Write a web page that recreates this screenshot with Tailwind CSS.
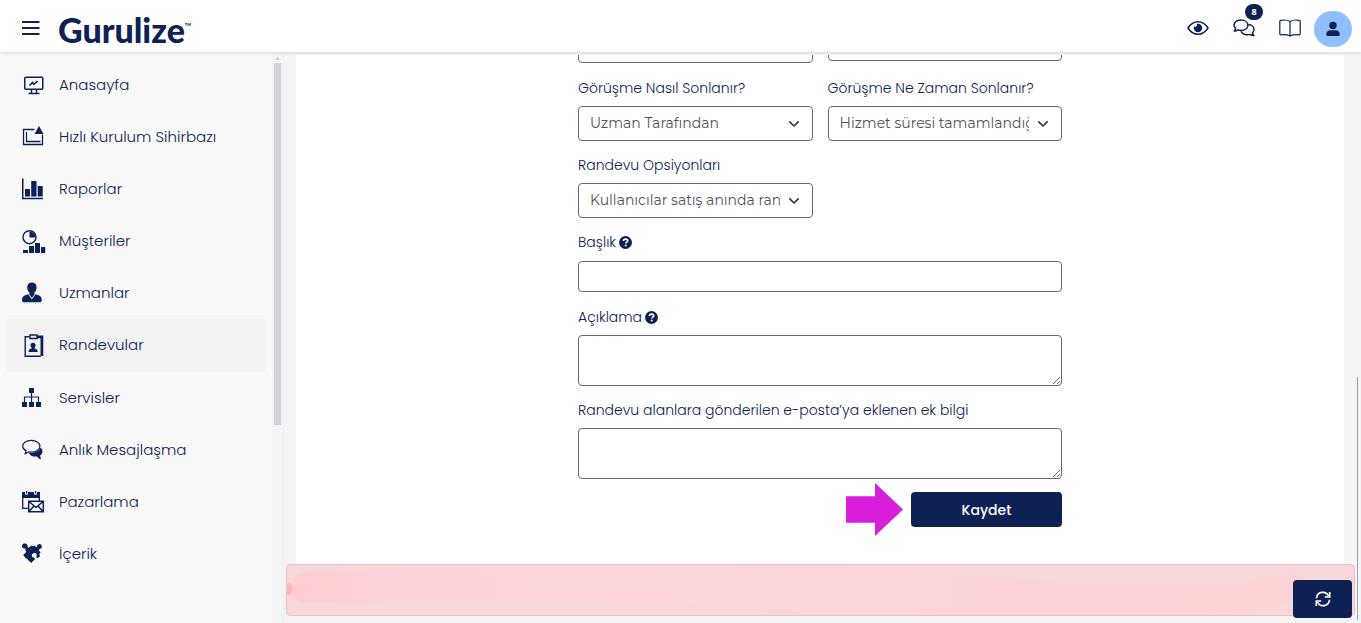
<!DOCTYPE html>
<html lang="tr">
<head>
<meta charset="utf-8">
<meta name="viewport" content="width=device-width, initial-scale=1">
<title>Gurulize – Randevular</title>
<script src="https://cdn.jsdelivr.net/npm/@tailwindcss/browser@4"></script>
</head>
<body class="flex h-screen flex-col overflow-hidden bg-[#f4f4f4] font-['Poppins','Inter',sans-serif] text-[#0e2154]">

<header class="relative z-10 flex h-[52px] shrink-0 items-center bg-white pl-[22px] pr-[9px] shadow-[0_1px_4px_rgba(0,0,0,0.12)]">
  <button type="button" aria-label="Menü" class="mt-1 flex h-6 w-[18px] items-center">
    <svg class="h-4 w-[18px]" viewBox="0 0 18 16" fill="none" stroke="currentColor" stroke-width="2"><path d="M0 2h17.500M0 8h17.500M0 14h17.500"/></svg>
  </button>
  <a href="#" class="ml-[18px] mt-2 flex items-start font-['Lato',sans-serif] text-[34px] leading-[44px] font-black">Gurulize<span class="mt-[14px] text-[4px] leading-[6px]">TM</span></a>
  <nav class="mt-1 ml-auto flex items-center gap-6" aria-label="Hesap">
    <button type="button" aria-label="Önizleme">
      <svg class="h-[22px] w-[22px]" viewBox="0 0 22 22" fill="none" stroke="currentColor" stroke-width="1.500"><path d="M1 11C3.500 7 7 4.800 11 4.800S18.500 7 21 11C18.500 15 15 17.200 11 17.200S3.500 15 1 11Z"/><path fill="currentColor" stroke="none" d="M11 6.800a4.200 4.200 0 1 1-4.200 4.200c0-.5.1-1 .3-1.400.9.500 2.100.2 2.600-.6.400-.7.400-1.400 0-2 .4-.1.800-.2 1.300-.2Z"/></svg>
    </button>
    <button type="button" aria-label="Mesajlar" class="relative">
      <svg class="h-[22px] w-[22px]" viewBox="0 0 22 22" fill="none" stroke="currentColor" stroke-width="1.500" stroke-linejoin="round"><path d="M8 3c4 0 6.900 2.200 6.900 5.200S12 13.400 8 13.400c-1 0-2-.1-2.900-.5-1 .7-2.300 1.100-3.900 1.100.8-.8 1.300-1.700 1.400-2.700C1.600 10.400 1 9.300 1 8.200 1 5.200 4 3 8 3Z"/><path d="M15.200 7.500c3.300.2 5.800 2.200 5.800 4.900 0 1.200-.5 2.300-1.500 3.200.1 1.200.6 2.100 1.400 3-1.600 0-3-.4-4-1.200-.9.300-1.700.4-2.700.4-2.900 0-5.200-1.400-6.100-3.600"/></svg>
      <span class="absolute -top-[13px] left-3 flex h-4 w-[18px] items-center justify-center rounded-full bg-[#0e2154] font-['Noto_Sans',sans-serif] text-[9px] font-bold text-white">8</span>
    </button>
    <button type="button" aria-label="Kılavuz">
      <svg class="h-[22px] w-[22px]" viewBox="0 0 22 22" fill="none" stroke="currentColor" stroke-width="1.200" stroke-linejoin="round"><path d="M11 4.500C8.500 3 4.500 2.800 1.700 3.400a1 1 0 0 0-.9 1v12.400a1 1 0 0 0 1.100 1C5 17.400 8.500 17.700 11 19c2.500-1.300 6-1.600 9.100-1.200a1 1 0 0 0 1.100-1V4.400a1 1 0 0 0-.9-1C17.500 2.800 13.500 3 11 4.500ZM11 4.500V19"/></svg>
    </button>
    <button type="button" aria-label="Profil" class="-ml-[11px] mt-[2px] flex h-9 w-[38px] items-center justify-center rounded-full bg-[#8fbfff]">
      <svg class="h-4 w-4" viewBox="0 0 16 16" fill="currentColor"><circle cx="8" cy="4.500" r="3.700"/><path d="M1.200 13.500c0-2.500 1.700-4.200 4.300-4.200h5c2.600 0 4.300 1.700 4.300 4.200 0 .9-.5 1.400-1.400 1.400H2.600c-.9 0-1.400-.5-1.400-1.400Z"/></svg>
    </button>
  </nav>
</header>

<div class="flex min-h-0 flex-1">
  <aside class="flex w-[284px] shrink-0 border-r border-[#eeeeee] bg-[#f9f9f9]">
    <nav class="flex-1 pl-[7px] pr-[7px] pt-[7px] text-[15px] font-light" aria-label="Ana menü">
      <a href="#" class="flex h-[52px] items-center gap-[13px] pl-[15px]">
        <svg class="h-6 w-6" viewBox="0 0 24 24" fill="none" stroke="currentColor" stroke-width="1.500"><rect x="2.750" y="4.250" width="18" height="12" rx="1"/><path d="M9.500 16.500v3.500M14.500 16.500v3.500M6.500 20.500h11"/><path stroke-width="1.700" d="M7.500 12.500l3-3 1.500 1.800 3.500-3.300"/></svg>
        Anasayfa</a>
      <a href="#" class="flex h-[52px] items-center gap-[13px] pl-[15px]">
        <svg class="h-6 w-6" viewBox="0 0 24 24" fill="none" stroke="currentColor" stroke-width="1.300"><path d="M12.500 4.500h-11v15h19v-10"/><path d="M4.500 7v9.500h14"/><path fill="currentColor" stroke="none" d="M17 1l4.500 8h-9Z"/></svg>
        Hızlı Kurulum Sihirbazı</a>
      <a href="#" class="flex h-[52px] items-center gap-[13px] pl-[15px]">
        <svg class="h-6 w-6" viewBox="0 0 24 24" fill="currentColor"><path d="M0 1.500h1.500v19.300H21v1.500H0ZM3 12h5v7.500H3ZM9.200 4h5.300v15.500H9.200ZM15.700 9h5v10.500h-5Z"/></svg>
        Raporlar</a>
      <a href="#" class="flex h-[52px] items-center gap-[13px] pl-[15px]">
        <svg class="h-6 w-6" viewBox="0 0 24 24" fill="currentColor"><circle cx="7.500" cy="8.200" r="6.500" fill="none" stroke="currentColor" stroke-width="1.400"/><path d="M7.500 2.500a6 6 0 0 1 6 6h-6ZM1 21h5v3H1ZM7 17h5v7H7ZM13 14h5v10h-5ZM19 18h4.200v6H19Z"/></svg>
        Müşteriler</a>
      <a href="#" class="flex h-[52px] items-center gap-[13px] pl-[15px]">
        <svg class="h-6 w-6" viewBox="0 0 24 24" fill="currentColor"><path d="M9.900 1.500c3 0 4.700 1.900 4.700 4.700 0 2.200-.8 4-2.100 5.400v1.700L9.900 17l-2.600-3.700v-1.700C6 10.200 5.200 8.400 5.200 6.200c0-2.800 1.700-4.700 4.700-4.700Z"/><path d="M6.300 13.300l3.500 5.300 3.700-5.300c3.500.7 6.300 2 6.300 5.500 0 1.500-.4 2.400-1.700 2.400H1.700C.4 21.200 0 20.300 0 18.800c0-3.500 2.800-4.800 6.300-5.500Z"/></svg>
        Uzmanlar</a>
      <a href="#" aria-current="page" class="flex h-[53px] items-center gap-[13px] bg-[#f2f2f2] pl-[15px]">
        <svg class="h-6 w-6" viewBox="0 0 24 24" fill="none" stroke="currentColor"><path stroke-width="1.400" d="M7.500 2.700H3.200v19.600h15.600"/><path stroke-width="2.800" d="M15 2.800h4.900V22"/><path stroke-width="1.400" d="M8 1h7v3.500H8Z"/><path fill="currentColor" stroke="none" d="M11 8.700c1.700 0 2.600 1.100 2.600 2.500 0 1-.4 1.900-1.100 2.500v.7c1.800.3 3.200 1 3.200 3.600H6.500c0-2.600 1.400-3.300 3.200-3.600v-.7c-.7-.6-1.200-1.500-1.200-2.500 0-1.400.9-2.500 2.500-2.500Z"/></svg>
        Randevular</a>
      <a href="#" class="flex h-[52px] items-center gap-[13px] pl-[15px]">
        <svg class="h-6 w-6" viewBox="0 0 24 24" fill="currentColor"><path d="M7 2h5v5H7ZM0 16h5v5H0ZM7 16h5v5H7ZM14 16h5v5h-5Z"/><path fill="none" stroke="currentColor" stroke-width="1.200" d="M9.500 6v10M2.500 16v-5h14v5"/></svg>
        Servisler</a>
      <a href="#" class="flex h-[52px] items-center gap-[13px] pl-[15px]">
        <svg class="h-6 w-6" viewBox="0 0 24 24" fill="currentColor"><path fill="none" stroke="currentColor" stroke-width="1.200" d="M9.300 2.300c5 0 8.600 2.400 8.600 5.900s-3.600 5.900-8.600 5.900c-1 0-2-.1-2.900-.3-.9 1-2 1.600-3.300 1.900.6-1 .9-2 .8-3.100C1.800 11.500.7 9.900.7 8.200c0-3.500 3.600-5.900 8.600-5.900Z"/><path d="M18.600 9.700c1.300 1 1.900 2.200 1.900 3.700 0 1.700-.9 3.100-2.400 4.100 0 1.100.4 2.500 1.300 4-2-.4-3.500-1.400-4.400-3-4.200.4-7.300-1.200-8-3.600 5.500 0 10.200-1.300 11.600-5.200Z"/></svg>
        Anlık Mesajlaşma</a>
      <a href="#" class="flex h-[52px] items-center gap-[13px] pl-[15px]">
        <svg class="h-6 w-6" viewBox="0 0 24 24" fill="currentColor"><path d="M0 2h3v2.500h3V2h6v2.500h3V2h3v6H0ZM4 1h1.200v2.500H4ZM13 1h1.200v2.500H13Z"/><path fill="none" stroke="currentColor" stroke-width="1.300" d="M.7 7v11.300H6M17.300 7v4"/><path fill="none" stroke="currentColor" stroke-width="1.500" d="M6.700 11.200h14.600v10.600H6.700ZM7 11.500l7 6 7-6M7 21.500l5-5.500M21 21.500L16 16"/></svg>
        Pazarlama</a>
      <a href="#" class="flex h-[52px] items-center gap-[13px] pl-[15px]">
        <svg class="h-6 w-6" viewBox="0 0 24 24" fill="currentColor"><path d="M2.500 1.500a2.500 2.500 0 0 1 2.900 3.300l1.100 1L9.500 3.500l1.500 1 1.300-.9 2 1.700.6-.7a2.500 2.500 0 1 1 2.800 2.500l-1 1.300 1.900 1.900-1.400 2 .9 1.700-2.500 2.300-1.500-1.500c1.300-1.300.6-3.400-1.200-3.700-2-.3-3.500 1.300-3 3.100.3 1 1.200 1.600 2.200 1.400l1 1.500L9.200 21 6 18l-1-1.500-1.400-.3-2.300-3.300 2.900-3-1-2.400.4-1.300A2.500 2.500 0 1 1 2.500 1.500Z"/></svg>
        İçerik</a>
    </nav>
    <div class="flex w-[11px] flex-col items-center bg-[#f4f4f4] pt-[5px]" aria-hidden="true">
      <svg class="h-[3px] w-[5px]" viewBox="0 0 5 3" fill="#c6c9cf"><path d="M2.500 0L5 3H0Z"/></svg>
      <div class="mt-[3px] h-[362px] w-[7px] bg-[#cfd2d8]"></div>
    </div>
  </aside>

  <main class="flex min-w-0 flex-1 flex-col pt-[3px]">
    <section class="ml-3 mr-[17px] flex-1 bg-white px-6">
      <form class="mx-auto flex max-w-[484px] flex-col text-[14px] leading-5 font-light text-[#0e2154]" onsubmit="return false">
        <div class="grid grid-cols-2 items-start gap-x-[15px]">
          <div class="flex h-2 items-end overflow-hidden"><select aria-label="Görüşme türü" class="h-[35px] w-full shrink-0 appearance-none rounded border border-[#6b6b6b] bg-white"><option></option></select></div>
          <div class="flex h-[6px] items-end overflow-hidden"><select aria-label="Görüşme süresi" class="h-[35px] w-full shrink-0 appearance-none rounded border border-[#6b6b6b] bg-white"><option></option></select></div>
        </div>

        <div class="mt-[15px] grid grid-cols-2 gap-x-[15px] gap-y-[14px]">
          <div>
            <label for="end-how" class="block">Görüşme Nasıl Sonlanır?</label>
            <div class="relative mt-2">
              <select id="end-how" class="block h-[35px] w-full appearance-none rounded border border-[#6b6b6b] bg-white pb-[2px] pl-[11px] pr-8 font-['Montserrat','Inter',sans-serif] text-[14px] font-normal text-[#505459]"><option>Uzman Tarafından</option></select>
              <svg class="pointer-events-none absolute right-[13px] top-3 h-3 w-3" viewBox="0 0 12 12" fill="none" stroke="#343a40" stroke-width="1.700" stroke-linecap="round" stroke-linejoin="round"><path d="M1.800 3.800L6 8l4.200-4.200"/></svg>
            </div>
          </div>
          <div>
            <label for="end-when" class="block">Görüşme Ne Zaman Sonlanır?</label>
            <div class="relative mt-2">
              <select id="end-when" class="block h-[35px] w-full appearance-none rounded border border-[#6b6b6b] bg-white pb-[2px] pl-[11px] pr-8 font-['Montserrat','Inter',sans-serif] text-[14px] font-normal text-[#505459]"><option>Hizmet süresi tamamlandığında</option></select>
              <svg class="pointer-events-none absolute right-[13px] top-3 h-3 w-3" viewBox="0 0 12 12" fill="none" stroke="#343a40" stroke-width="1.700" stroke-linecap="round" stroke-linejoin="round"><path d="M1.800 3.800L6 8l4.200-4.200"/></svg>
            </div>
          </div>
          <div>
            <label for="options" class="block">Randevu Opsiyonları</label>
            <div class="relative mt-2">
              <select id="options" class="block h-[35px] w-full appearance-none rounded border border-[#6b6b6b] bg-white pb-[2px] pl-[11px] pr-8 font-['Montserrat','Inter',sans-serif] text-[14px] font-normal text-[#505459]"><option>Kullanıcılar satış anında randevu alır</option></select>
              <svg class="pointer-events-none absolute right-[13px] top-3 h-3 w-3" viewBox="0 0 12 12" fill="none" stroke="#343a40" stroke-width="1.700" stroke-linecap="round" stroke-linejoin="round"><path d="M1.800 3.800L6 8l4.200-4.200"/></svg>
            </div>
          </div>
        </div>

        <label for="title" class="mt-[14px] flex items-center gap-[3px]">Başlık
          <svg class="h-[13px] w-[13px]" viewBox="0 0 13 13"><circle cx="6.500" cy="6.500" r="6.500" fill="#0e2154"/><path d="M4.400 5c.1-1.200.9-1.900 2.200-1.900 1.200 0 2.100.7 2.100 1.700 0 1.300-1.800 1.400-1.900 2.700" fill="none" stroke="#fff" stroke-width="1.600"/><circle cx="6.700" cy="9.600" r="1" fill="#fff"/></svg>
        </label>
        <input id="title" type="text" class="mt-[9px] h-[31px] w-full rounded border border-[#6b6b6b] bg-white px-3">

        <label for="description" class="mt-[15px] flex items-center gap-[3px]">Açıklama
          <svg class="h-[13px] w-[13px]" viewBox="0 0 13 13"><circle cx="6.500" cy="6.500" r="6.500" fill="#0e2154"/><path d="M4.400 5c.1-1.200.9-1.900 2.200-1.900 1.200 0 2.100.7 2.100 1.700 0 1.300-1.800 1.400-1.900 2.700" fill="none" stroke="#fff" stroke-width="1.600"/><circle cx="6.700" cy="9.600" r="1" fill="#fff"/></svg>
        </label>
        <textarea id="description" class="mt-2 h-[51px] w-full rounded border border-[#6b6b6b] bg-white px-3"></textarea>

        <label for="mail-note" class="mt-[14px] block">Randevu alanlara gönderilen e-posta’ya eklenen ek bilgi</label>
        <textarea id="mail-note" class="mt-2 h-[51px] w-full rounded border border-[#6b6b6b] bg-white px-3"></textarea>

        <div class="mt-1 flex items-center justify-end gap-2">
          <svg class="h-[53px] w-[57px]" viewBox="0 0 57 54" preserveAspectRatio="none" fill="#d81edb" aria-hidden="true"><path d="M0 13.500h29V0l28 27-28 27V40.500H0Z"/></svg>
          <button type="submit" class="h-[35px] w-[151px] rounded bg-[#0e2154] text-[14px] font-medium text-white">Kaydet</button>
        </div>
      </form>
    </section>

    <div role="alert" class="ml-[2px] mr-[6px] mb-[7px] h-[52px] shrink-0 overflow-hidden rounded border border-[#f7bcc3] bg-[#f6d7da]">
      <svg class="h-full w-full" viewBox="0 0 1067 50" preserveAspectRatio="none">
        <defs>
          <linearGradient id="smudge" x1="0" x2="1" y1="0" y2="0"><stop offset="0" stop-color="#ffccd1"/><stop offset=".08" stop-color="#fed2d7"/><stop offset=".4" stop-color="#fdd6da"/><stop offset=".7" stop-color="#fdd3d8"/><stop offset="1" stop-color="#fdd3d6"/></linearGradient>
        </defs>
        <path fill="url(#smudge)" d="M3 23C5 12 11 7 24 7l40-1 20-2 50 1 300 0 40-5 60 3 90 2 50 5 120 8 110 1 50-1c25-5 45-12 58-8 14 6 8 20-18 30l-40 7-90 1H520l-60-6-120-3-110-2-90-3-60 4-50 0C12 39 4 34 3 23Z"/>
        <ellipse cx="2" cy="24" rx="3.500" ry="6" fill="#ffb6c1"/>
      </svg>
    </div>
  </main>
</div>

<div class="fixed top-[377px] right-[3px] bottom-[3px] w-px bg-[#8fa9c8]" aria-hidden="true"></div>
<button type="button" aria-label="Yenile" class="fixed right-[9px] bottom-[5px] flex h-[38px] w-[59px] items-center justify-center rounded bg-[#0e2154] text-white">
  <svg class="h-4 w-4" viewBox="0 0 16 16" fill="none" stroke="currentColor" stroke-width="1.700"><path d="M1.500 7.200A6.300 6.300 0 0 1 13.500 5M14.500 8.800A6.300 6.300 0 0 1 2.500 11"/><path d="M14.700 1v5H9.800M1.300 15v-5h4.900"/></svg>
</button>
</body>
</html>
